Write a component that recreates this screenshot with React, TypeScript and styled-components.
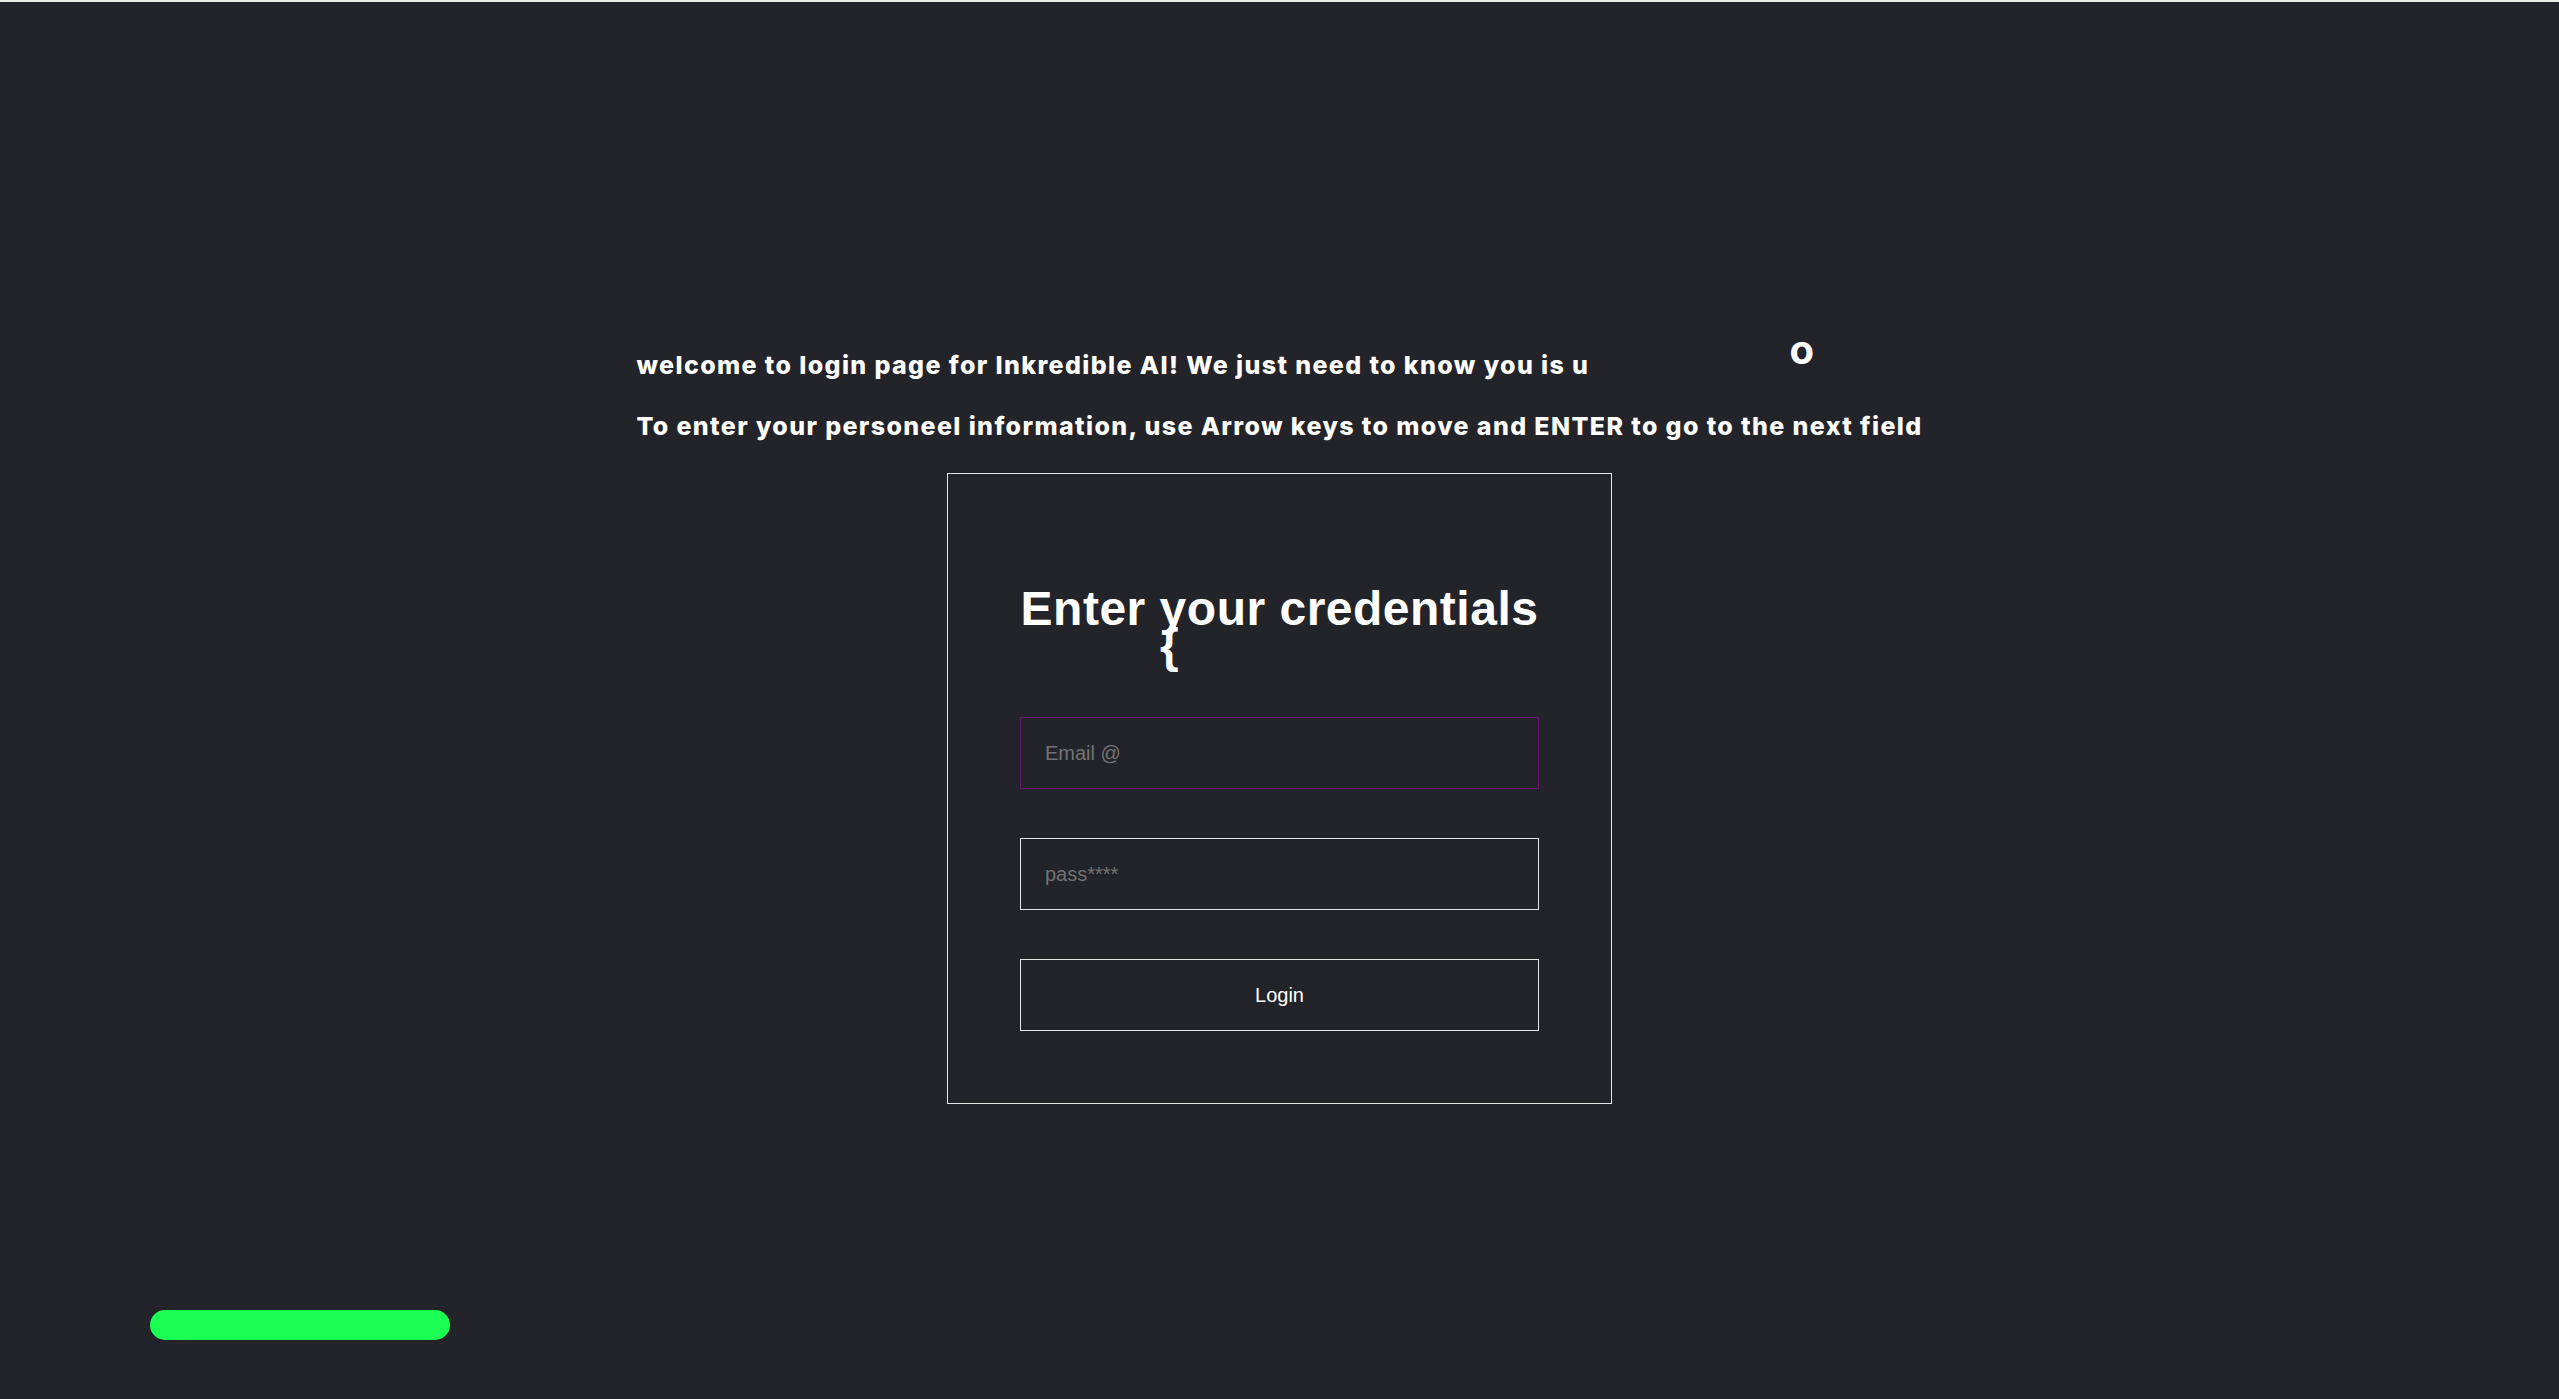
import React from "react";
import styled, { createGlobalStyle } from "styled-components";

const GlobalStyle = createGlobalStyle`
  html, body {
    margin: 0;
    padding: 0;
    background: #23232a;
  }
  body {
    font-family: "Inter", "Noto Sans", sans-serif;
    color: #ffffff;
  }
  * { box-sizing: border-box; }
`;

const Page = styled.div`
  min-height: 100vh;
  display: flex;
  flex-direction: column;
  align-items: center;
`;

const TopStrip = styled.div`
  align-self: stretch;
  height: 2px;
  background: #e9e9e9;
`;

const Intro = styled.div`
  position: relative;
  margin-top: 348px;
  display: flex;
  flex-direction: column;
  gap: 31px;
`;

const IntroLine = styled.p`
  margin: 0;
  font-family: "Inter", sans-serif;
  font-weight: 800;
  font-size: 25px;
  line-height: 30px;
  letter-spacing: 1.38px;
  white-space: nowrap;
  color: #ffffff;
`;

const FloatingLetter = styled.span<{ $left: number; $top: number; $size: number; $font: string }>`
  position: absolute;
  left: ${(p) => p.$left}px;
  top: ${(p) => p.$top}px;
  font-family: ${(p) => p.$font};
  font-weight: 700;
  font-size: ${(p) => p.$size}px;
  line-height: 1;
  color: #ffffff;
`;

const Card = styled.form`
  position: relative;
  margin-top: 32px;
  width: 665px;
  border: 1px solid #e4e4e4;
  padding: 72px;
  display: flex;
  flex-direction: column;
`;

const Heading = styled.h1`
  margin: 35px 0 81px;
  font-family: "Liberation Sans", Arial, sans-serif;
  font-weight: 700;
  font-size: 48px;
  line-height: 55px;
  letter-spacing: 0.5px;
  text-align: center;
  color: #ffffff;
  white-space: nowrap;
`;

const Fields = styled.div`
  display: flex;
  flex-direction: column;
  gap: 49px;
`;

const Field = styled.input<{ $accent?: boolean }>`
  width: 100%;
  height: 72px;
  padding: 0 24px;
  background: transparent;
  border: 1px solid ${(p) => (p.$accent ? "#6c1470" : "#e4e4e4")};
  border-radius: 0;
  outline: none;
  font-family: "Liberation Sans", Arial, sans-serif;
  font-size: 20px;
  color: #ffffff;
  &::placeholder {
    color: #737373;
  }
`;

const LoginButton = styled.button`
  width: 100%;
  height: 72px;
  background: transparent;
  border: 1px solid #e4e4e4;
  border-radius: 0;
  font-family: "Liberation Sans", Arial, sans-serif;
  font-size: 20px;
  color: #ffffff;
  cursor: pointer;
`;

const ProgressBar = styled.div`
  position: fixed;
  left: 150px;
  bottom: 59px;
  width: 300px;
  height: 30px;
  border-radius: 15px;
  background: #1bff52;
`;

export default function App() {
  return (
    <>
      <GlobalStyle />
      <Page>
        <TopStrip />
        <Intro>
          <IntroLine>welcome to login page for Inkredible AI! We just need to know you is u</IntroLine>
          <IntroLine>
            To enter your personeel information, use Arrow keys to move and ENTER to go to the next field
          </IntroLine>
          <FloatingLetter $left={1153} $top={-20} $size={40} $font={'"Inter", sans-serif'}>
            o
          </FloatingLetter>
        </Intro>
        <Card onSubmit={(e) => e.preventDefault()}>
          <Heading>Enter your credentials</Heading>
          <FloatingLetter $left={212} $top={148} $size={48} $font={'"Liberation Sans", Arial, sans-serif'}>
            {"{"}
          </FloatingLetter>
          <Fields>
            <Field $accent type="email" placeholder="Email @" />
            <Field type="password" placeholder="pass****" />
            <LoginButton type="submit">Login</LoginButton>
          </Fields>
        </Card>
        <ProgressBar />
      </Page>
    </>
  );
}
